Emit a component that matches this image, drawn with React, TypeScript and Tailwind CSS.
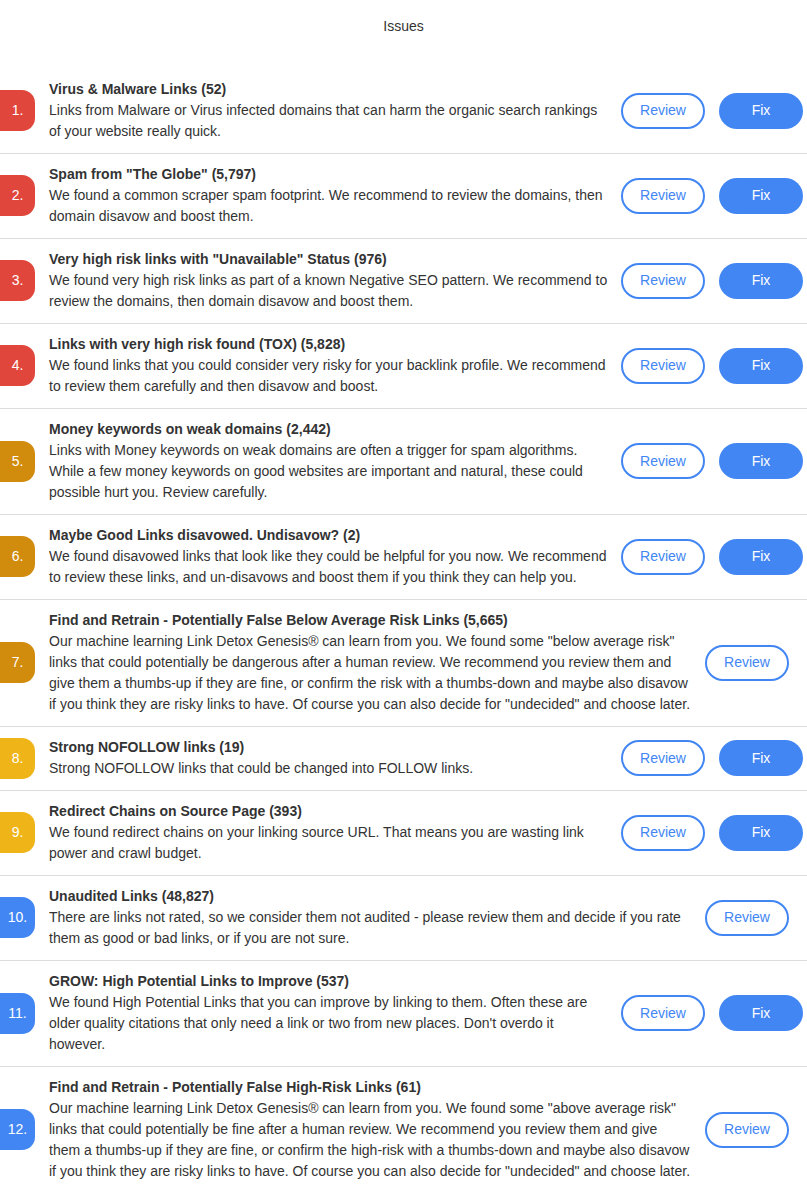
import React from 'react';

type Issue = {
  title: string;
  text: string;
  color: string;
  fix: boolean;
};

const RED = 'bg-[#e0463c]';
const ORANGE = 'bg-[#d18b0d]';
const YELLOW = 'bg-[#efb418]';
const BLUE = 'bg-[#4286f4]';

const issues: Issue[] = [
  {
    title: 'Virus & Malware Links (52)',
    text: 'Links from Malware or Virus infected domains that can harm the organic search rankings of your website really quick.',
    color: RED,
    fix: true,
  },
  {
    title: 'Spam from "The Globe" (5,797)',
    text: 'We found a common scraper spam footprint. We recommend to review the domains, then domain disavow and boost them.',
    color: RED,
    fix: true,
  },
  {
    title: 'Very high risk links with "Unavailable" Status (976)',
    text: 'We found very high risk links as part of a known Negative SEO pattern. We recommend to review the domains, then domain disavow and boost them.',
    color: RED,
    fix: true,
  },
  {
    title: 'Links with very high risk found (TOX) (5,828)',
    text: 'We found links that you could consider very risky for your backlink profile. We recommend to review them carefully and then disavow and boost.',
    color: RED,
    fix: true,
  },
  {
    title: 'Money keywords on weak domains (2,442)',
    text: 'Links with Money keywords on weak domains are often a trigger for spam algorithms. While a few money keywords on good websites are important and natural, these could possible hurt you. Review carefully.',
    color: ORANGE,
    fix: true,
  },
  {
    title: 'Maybe Good Links disavowed. Undisavow? (2)',
    text: 'We found disavowed links that look like they could be helpful for you now. We recommend to review these links, and un-disavows and boost them if you think they can help you.',
    color: ORANGE,
    fix: true,
  },
  {
    title: 'Find and Retrain - Potentially False Below Average Risk Links (5,665)',
    text: 'Our machine learning Link Detox Genesis® can learn from you. We found some "below average risk" links that could potentially be dangerous after a human review. We recommend you review them and give them a thumbs-up if they are fine, or confirm the risk with a thumbs-down and maybe also disavow if you think they are risky links to have. Of course you can also decide for "undecided" and choose later.',
    color: ORANGE,
    fix: false,
  },
  {
    title: 'Strong NOFOLLOW links (19)',
    text: 'Strong NOFOLLOW links that could be changed into FOLLOW links.',
    color: YELLOW,
    fix: true,
  },
  {
    title: 'Redirect Chains on Source Page (393)',
    text: 'We found redirect chains on your linking source URL. That means you are wasting link power and crawl budget.',
    color: YELLOW,
    fix: true,
  },
  {
    title: 'Unaudited Links (48,827)',
    text: 'There are links not rated, so we consider them not audited - please review them and decide if you rate them as good or bad links, or if you are not sure.',
    color: BLUE,
    fix: false,
  },
  {
    title: 'GROW: High Potential Links to Improve (537)',
    text: "We found High Potential Links that you can improve by linking to them. Often these are older quality citations that only need a link or two from new places. Don't overdo it however.",
    color: BLUE,
    fix: true,
  },
  {
    title: 'Find and Retrain - Potentially False High-Risk Links (61)',
    text: 'Our machine learning Link Detox Genesis® can learn from you. We found some "above average risk" links that could potentially be fine after a human review. We recommend you review them and give them a thumbs-up if they are fine, or confirm the high-risk with a thumbs-down and maybe also disavow if you think they are risky links to have. Of course you can also decide for "undecided" and choose later.',
    color: BLUE,
    fix: false,
  },
];

function IssueRow({ issue, index }: { issue: Issue; index: number }) {
  return (
    <div className="flex items-center border-b border-[#dddddd] pt-[10px] pb-[11px]">
      <div
        className={`${issue.color} w-[35px] h-[41px] shrink-0 rounded-r-[13px] flex items-center justify-center text-white text-[14px]`}
      >
        {index + 1}.
      </div>
      <div className="flex-1 ml-[14px] text-[14px] leading-[21px] text-[#333333]">
        <div className="font-bold">{issue.title}</div>
        <div>{issue.text}</div>
      </div>
      <div className={`flex items-center gap-[14px] ${issue.fix ? 'ml-[10px] mr-[4px]' : 'ml-[14px] mr-[18px]'}`}>
        <button className="w-[84px] h-[36px] rounded-full border-2 border-[#4286f4] bg-white text-[#4286f4] text-[14px]">
          Review
        </button>
        {issue.fix && (
          <button className="w-[84px] h-[36px] rounded-full bg-[#4286f4] text-white text-[14px]">
            Fix
          </button>
        )}
      </div>
    </div>
  );
}

export default function App() {
  return (
    <div className="bg-white min-h-screen font-['Liberation_Sans',Arial,sans-serif]">
      <div className="h-[69px] pt-[16px] text-center text-[14px] leading-[21px] text-[#333333]">Issues</div>
      {issues.map((issue, i) => (
        <IssueRow key={i} issue={issue} index={i} />
      ))}
    </div>
  );
}
